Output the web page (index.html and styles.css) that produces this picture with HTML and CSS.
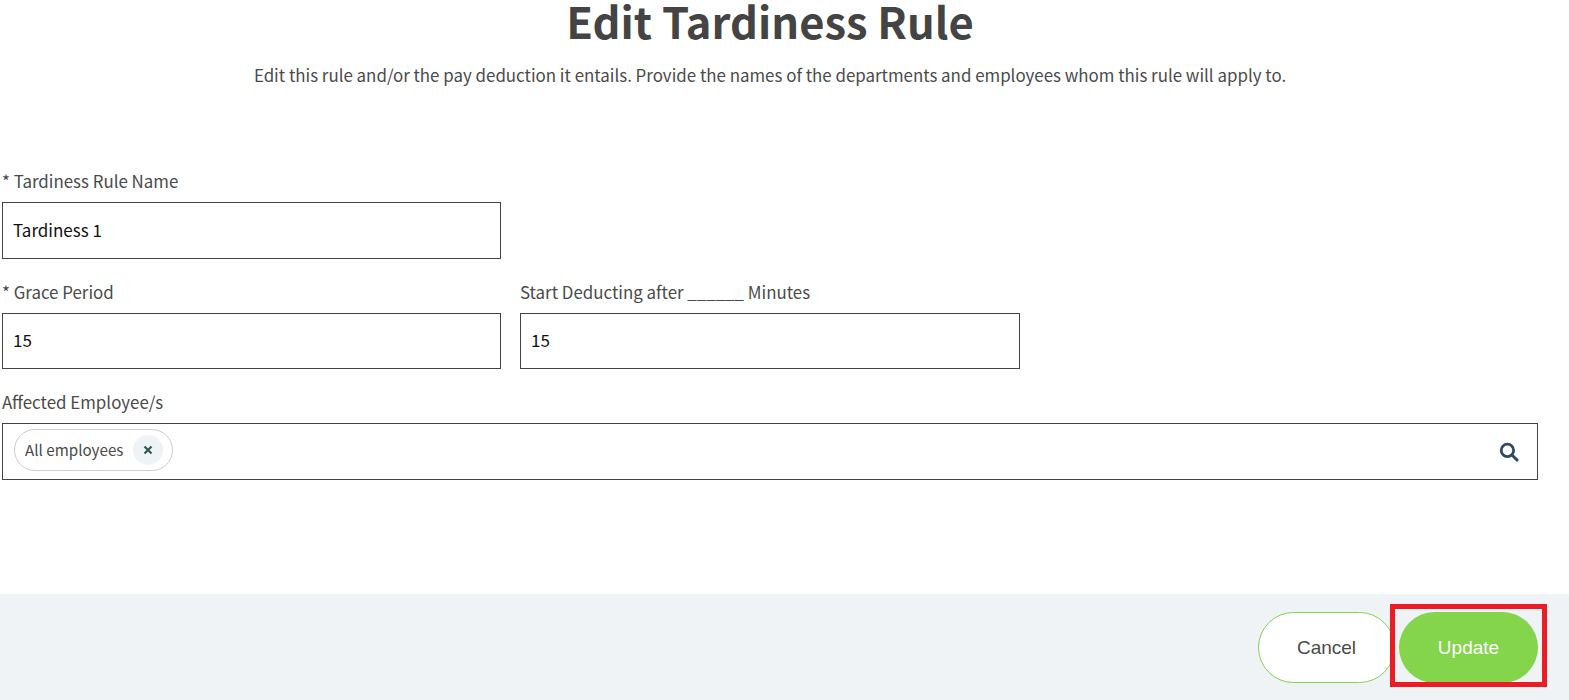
FILE: index.html
```html
<!DOCTYPE html>
<html lang="en">
<head>
    <meta charset="UTF-8">
    <meta name="viewport" content="width=device-width, initial-scale=1.0">
    <title>Edit Tardiness Rule</title>
    <link rel="stylesheet" href="styles.css">
</head>
<body>
    <div class="page">
        <div class="heading">
            <h1>Edit Tardiness Rule</h1>
            <p>Edit this rule and/or the pay deduction it entails. Provide the names of the departments and employees whom this rule will apply to.</p>
        </div>

        <form class="rule-form">
            <div class="form-row">
                <div class="form-group">
                    <label for="rule-name">* Tardiness Rule Name</label>
                    <input type="text" id="rule-name" value="Tardiness 1">
                </div>
            </div>

            <div class="form-row">
                <div class="form-group">
                    <label for="grace">* Grace Period</label>
                    <input type="text" id="grace" value="15">
                </div>
                <div class="form-group">
                    <label for="start">Start Deducting after ______ Minutes</label>
                    <input type="text" id="start" value="15">
                </div>
            </div>

            <div class="form-row">
                <div class="form-group form-group-wide">
                    <label>Affected Employee/s</label>
                    <div class="tag-input">
                        <span class="tag">
                            <span class="tag-label">All employees</span>
                            <span class="tag-remove">
                                <svg width="10" height="10" viewBox="0 0 10 10"><path d="M1.5 1.5L8.5 8.5M8.5 1.5L1.5 8.5" stroke="#2f5a4a" stroke-width="2.2"/></svg>
                            </span>
                        </span>
                        <svg class="search-icon" width="20" height="20" viewBox="0 0 20 20"><circle cx="8.4" cy="8.4" r="6.2" fill="none" stroke="#2f4a66" stroke-width="2.8"/><path d="M13 13L18 18" stroke="#2f4a66" stroke-width="3" stroke-linecap="round"/></svg>
                    </div>
                </div>
            </div>
        </form>
    </div>

    <div class="footer">
        <button type="button" class="btn btn-cancel">Cancel</button>
        <button type="button" class="btn btn-update">Update</button>
        <div class="highlight"></div>
    </div>
</body>
</html>
```

FILE: styles.css
```css
html, body {
    margin: 0;
    padding: 0;
    background: white;
}
body {
    font-family: "Noto Sans CJK JP", "Noto Sans", sans-serif;
    color: #4a4a4a;
    height: 700px;
    overflow: hidden;
}
.page {
    height: 594px;
    padding-left: 2px;
    width: 1536px;
}
.heading {
    text-align: center;
    height: 172px;
}
.heading h1 {
    margin: 0;
    font-size: 43.5px;
    line-height: 42px;
    font-weight: 700;
    color: #444;
}
.heading p {
    margin: 0;
    padding-top: 20px;
    font-size: 16.9px;
    line-height: 26px;
}
.form-row {
    display: flex;
    gap: 19px;
    margin-bottom: 24px;
}
.form-group {
    width: 499px;
}
.form-group + .form-group {
    width: 499.5px;
}
.form-group-wide {
    width: 1536px;
}
label {
    display: block;
    font-size: 16.9px;
    line-height: 18px;
    margin-bottom: 12px;
}
input[type="text"] {
    display: block;
    box-sizing: border-box;
    width: 100%;
    height: 56.5px;
    padding: 0 10px 2px;
    border: 1px solid #444;
    font-family: inherit;
    font-size: 17px;
    color: #111;
    outline: none;
}
.tag-input {
    box-sizing: border-box;
    height: 57px;
    border: 1px solid #444;
    display: flex;
    align-items: center;
    justify-content: space-between;
    padding: 0 17px 0 11px;
}
.tag {
    box-sizing: border-box;
    display: flex;
    align-items: center;
    gap: 10px;
    height: 42px;
    margin-bottom: 4px;
    padding: 0 9px 0 10px;
    border: 1px solid #ccc;
    border-radius: 21px;
    font-size: 15.2px;
}
.tag-label {
    padding-bottom: 2px;
}
.tag-remove {
    width: 30px;
    height: 30px;
    border-radius: 50%;
    background: #eff3f6;
    display: flex;
    align-items: center;
    justify-content: center;
}
.search-icon {
    margin-left: -1px;
    margin-right: 1px;
}
.footer {
    position: relative;
    height: 106px;
    background: #eff3f6;
    display: flex;
    justify-content: flex-end;
    align-items: flex-start;
    gap: 4px;
    padding: 18px 31px 0 0;
}
.btn {
    box-sizing: border-box;
    height: 71px;
    border-radius: 36px;
    font-family: "Liberation Sans", Arial, sans-serif;
    font-size: 19px;
}
.btn-cancel {
    width: 137px;
    background: white;
    border: 1px solid #84d44c;
    color: #4a4a4a;
}
.btn-update {
    width: 139px;
    background: #84d44c;
    border: none;
    color: white;
}
.highlight {
    position: absolute;
    left: 1390px;
    top: 10px;
    width: 147px;
    height: 73px;
    border: 5px solid #ed1c24;
}
```
